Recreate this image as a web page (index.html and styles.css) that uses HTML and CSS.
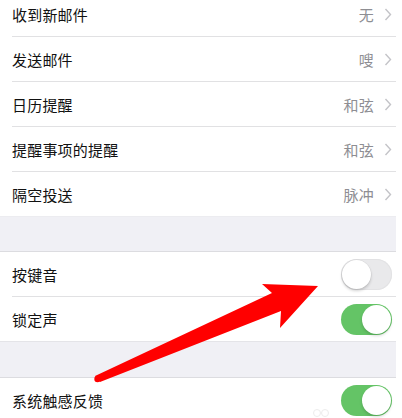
FILE: index.html
```html
<!DOCTYPE html>
<html lang="zh-CN">
<head>
<meta charset="utf-8">
<title>声音与触感</title>
<link rel="stylesheet" href="styles.css">
</head>
<body>
<div class="screen">
  <div class="group">
    <div class="row"><div class="row-inner"><span class="label">收到新邮件</span><span class="value">无</span><svg class="chev" viewBox="0 0 8 13"><path d="M1.5 1 L6.5 6.5 L1.5 12"/></svg></div></div>
    <div class="row"><div class="row-inner"><span class="label">发送邮件</span><span class="value">嗖</span><svg class="chev" viewBox="0 0 8 13"><path d="M1.5 1 L6.5 6.5 L1.5 12"/></svg></div></div>
    <div class="row"><div class="row-inner"><span class="label">日历提醒</span><span class="value">和弦</span><svg class="chev" viewBox="0 0 8 13"><path d="M1.5 1 L6.5 6.5 L1.5 12"/></svg></div></div>
    <div class="row"><div class="row-inner"><span class="label">提醒事项的提醒</span><span class="value">和弦</span><svg class="chev" viewBox="0 0 8 13"><path d="M1.5 1 L6.5 6.5 L1.5 12"/></svg></div></div>
    <div class="row"><div class="row-inner last"><span class="label">隔空投送</span><span class="value">脉冲</span><svg class="chev" viewBox="0 0 8 13"><path d="M1.5 1 L6.5 6.5 L1.5 12"/></svg></div></div>
  </div>
  <div class="band band-a"></div>
  <div class="group">
    <div class="row"><div class="row-inner"><span class="label">按键音</span><span class="switch"><span class="knob"></span></span></div></div>
    <div class="row"><div class="row-inner last"><span class="label">锁定声</span><span class="switch on"><span class="knob"></span></span></div></div>
  </div>
  <div class="band band-b"></div>
  <div class="group">
    <div class="row"><div class="row-inner last"><span class="label">系统触感反馈</span><span class="switch on"><span class="knob"></span></span></div></div>
  </div>
</div>
<svg class="arrow" viewBox="0 0 402 418" width="402" height="418">
  <polygon points="95,376 272,293 262,284 318,286 280,328 281,311 100,382" fill="#ff0000"/>
  <circle cx="97.5" cy="379" r="3.2" fill="#ff0000"/>
</svg>
<svg class="mark" viewBox="0 0 20 10" width="20" height="10">
  <circle cx="5" cy="6" r="3.5"/>
  <circle cx="13" cy="6" r="3.5"/>
</svg>
</body>
</html>
```
FILE: styles.css
```css
html, body {
  margin: 0;
  padding: 0;
  background: #ffffff;
  width: 402px;
  height: 418px;
  overflow: hidden;
}

body {
  position: relative;
  font-family: "Noto Sans CJK SC", "Noto Sans", sans-serif;
}

.screen {
  width: 396px;
  margin-top: -8px;
}

.row {
  padding-left: 12px;
  background: #ffffff;
}

.row-inner {
  height: 44px;
  display: flex;
  align-items: center;
  padding-right: 4px;
  border-bottom: 1px solid #e1e1e3;
}

.row-inner.last {
  border-bottom: none;
}

.label {
  flex: 1;
  font-size: 15px;
  color: #111111;
  letter-spacing: 0.2px;
}

.value {
  font-size: 15px;
  color: #8e8e93;
  margin-right: 10px;
  letter-spacing: 0.3px;
}

.chev {
  width: 8px;
  height: 13px;
  fill: none;
  stroke: #c4c4c8;
  stroke-width: 1.4;
}

.band {
  background: #f0f0f5;
  border-top: 1px solid #e4e4e8;
  border-bottom: 1px solid #dcdce0;
}

.band-a {
  height: 34px;
  border-top-color: #ececf0;
}

.band-b {
  height: 35px;
}

.switch {
  position: relative;
  width: 51px;
  height: 31px;
  border-radius: 16px;
  background: #e9e9eb;
  box-shadow: inset 0 0 0 1px #e2e2e4;
  box-sizing: border-box;
}

.switch.on {
  background: #64c466;
  box-shadow: none;
}

.knob {
  position: absolute;
  top: 1px;
  left: 1px;
  width: 29px;
  height: 29px;
  border-radius: 50%;
  background: #ffffff;
  box-shadow: 0 2px 3px rgba(0, 0, 0, 0.18), 0 0 0 0.5px rgba(0, 0, 0, 0.06);
}

.switch.on .knob {
  left: 21px;
  box-shadow: 0 2px 3px rgba(0, 0, 0, 0.15);
}

.arrow {
  position: absolute;
  left: 0;
  top: 0;
  pointer-events: none;
}

.mark {
  position: absolute;
  left: 312px;
  top: 407px;
  fill: none;
  stroke: #ececec;
  stroke-width: 1;
}
```
